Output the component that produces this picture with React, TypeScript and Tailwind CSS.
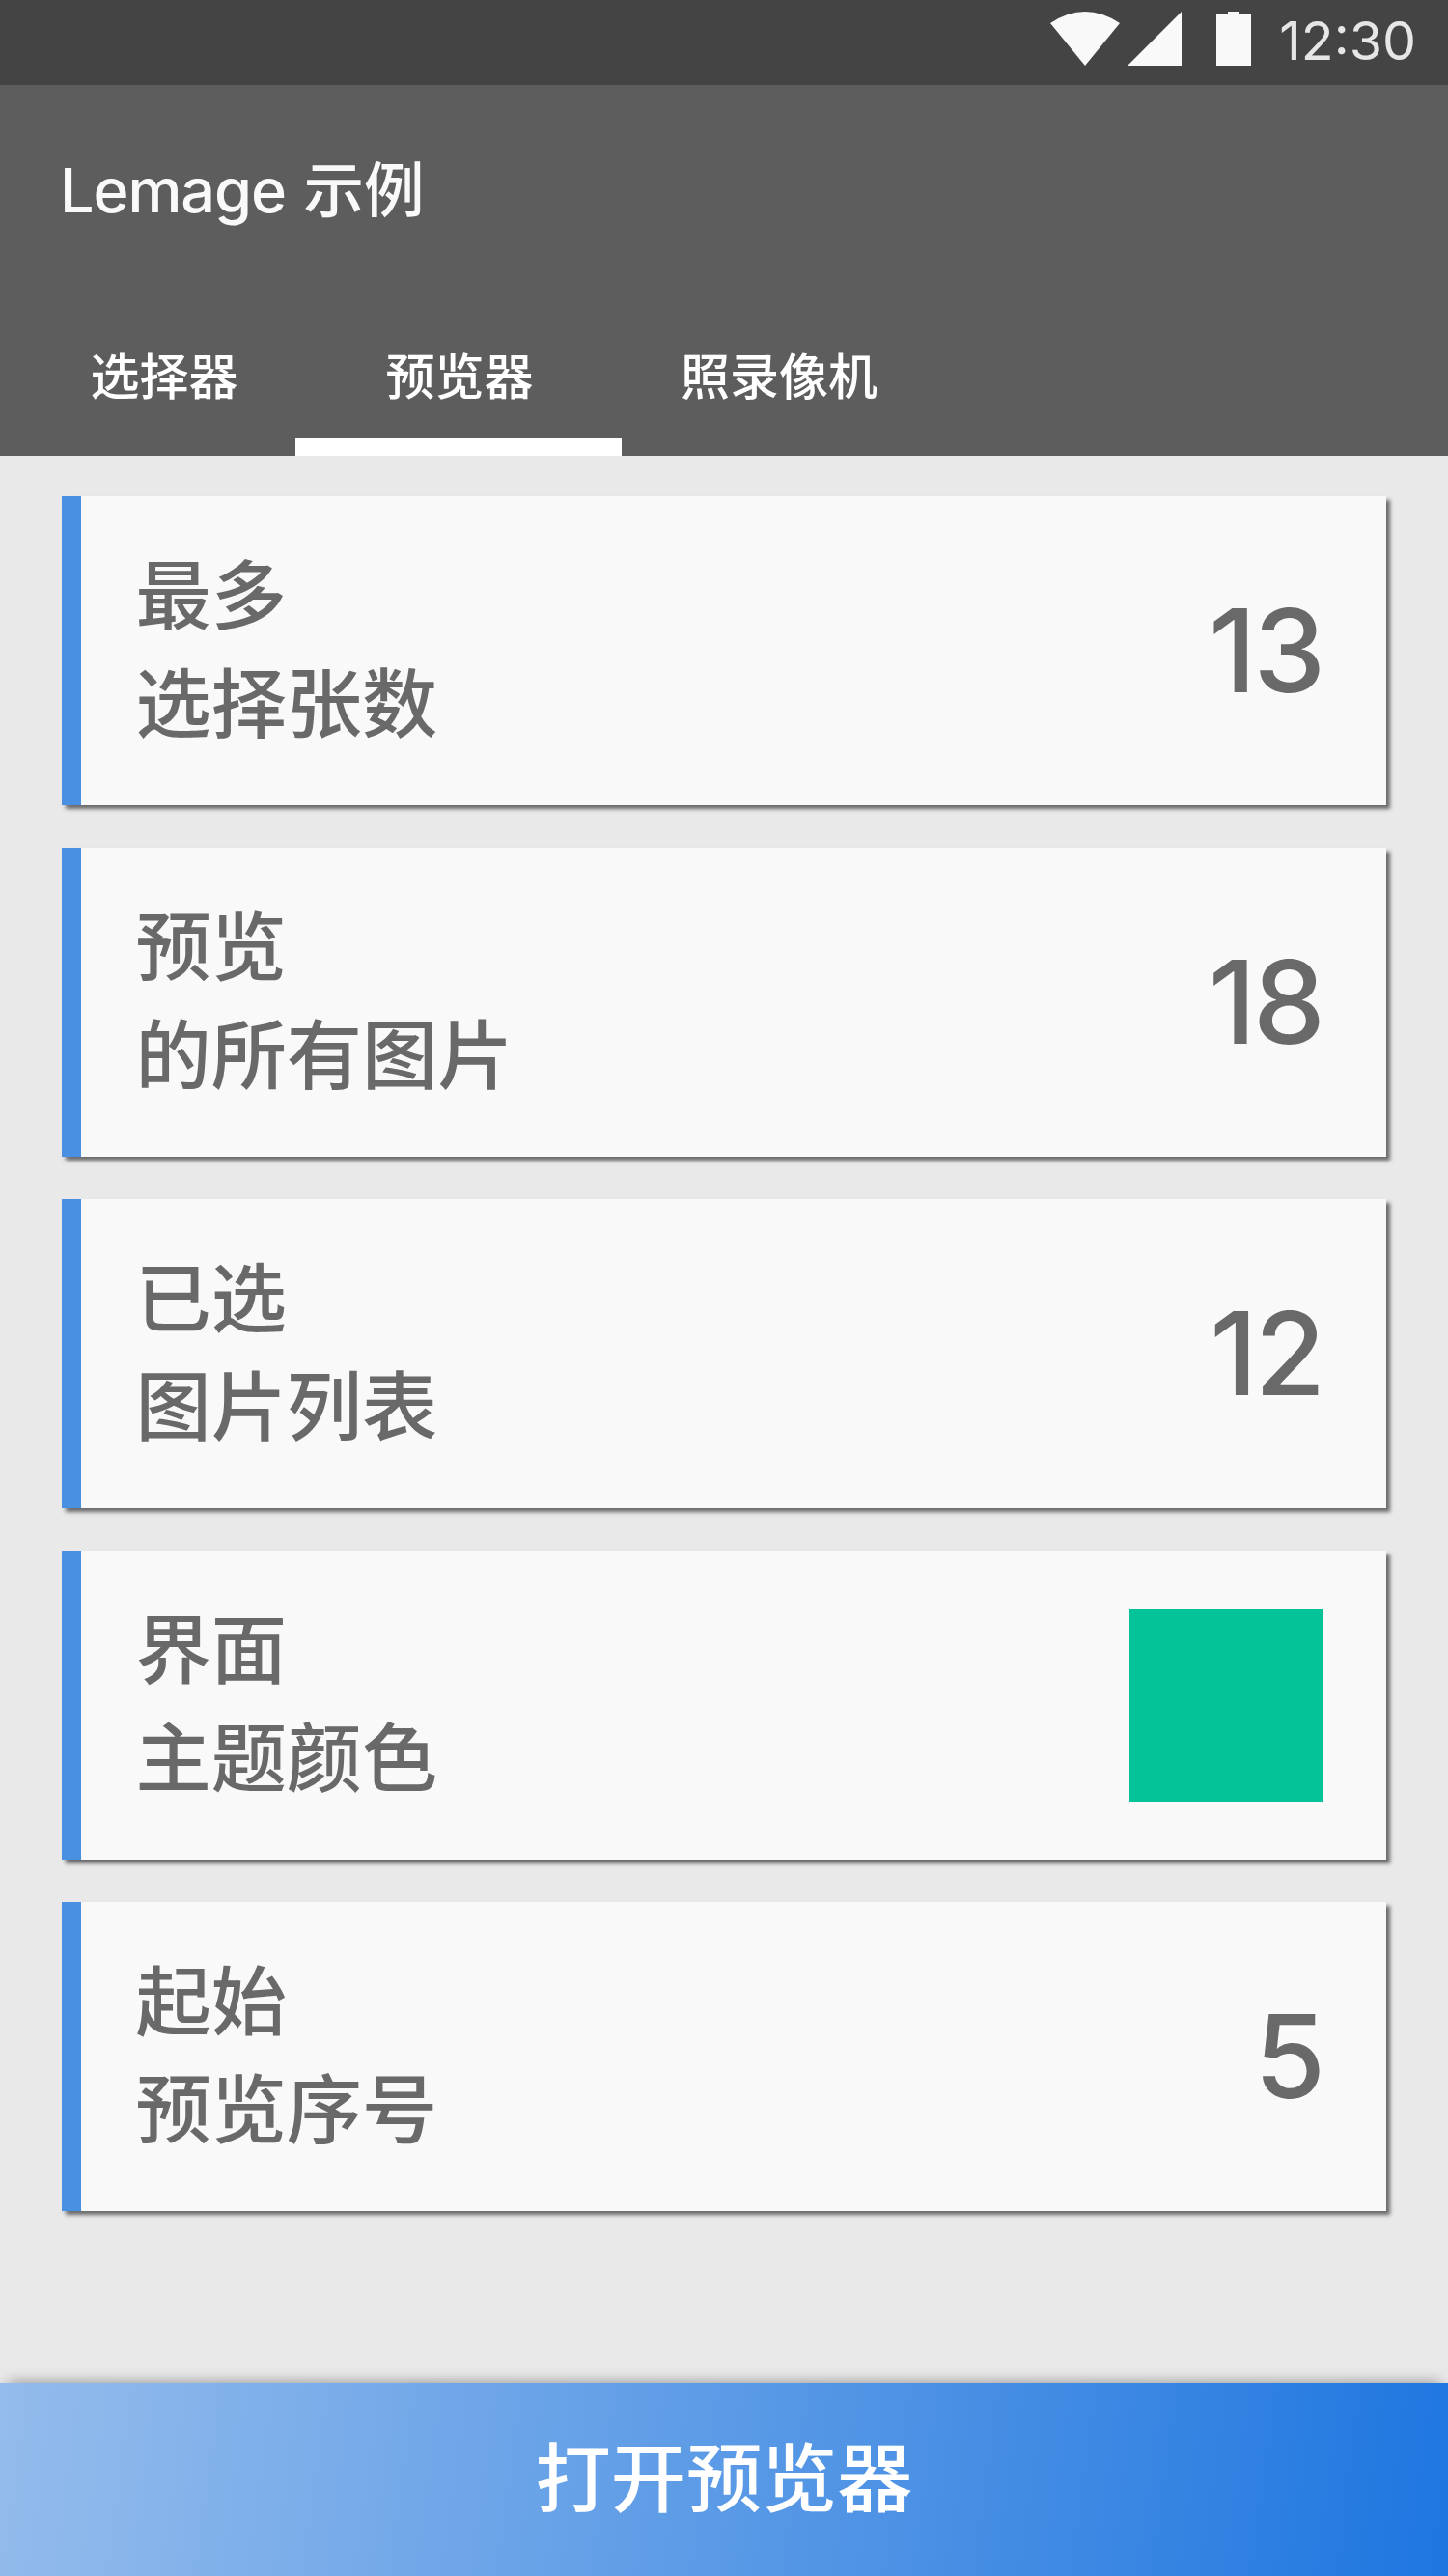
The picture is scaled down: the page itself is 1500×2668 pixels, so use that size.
const cards: { top: string; bottom: string; value?: string }[] = [
  { top: "最多", bottom: "选择张数", value: "13" },
  { top: "预览", bottom: "的所有图片", value: "18" },
  { top: "已选", bottom: "图片列表", value: "12" },
  { top: "界面", bottom: "主题颜色" },
  { top: "起始", bottom: "预览序号", value: "5" },
];

export default function App() {
  return (
    <div className="flex h-[2668px] w-[1500px] flex-col overflow-hidden bg-[#e9e9e9] font-['Inter','Noto_Sans_CJK_SC',sans-serif] font-medium text-white">
      <div className="flex h-[88px] shrink-0 justify-end bg-[#444444] pr-[33px]">
        <svg width="212" height="60" viewBox="1087 10 212 60" className="mt-[10px] mr-[26px]" fill="#f9f9f9">
          <path d="M1088 24Q1124 0 1160 24L1124 68Z" />
          <path d="M1224 12V68H1168Z" />
          <path d="M1260 15H1272V12H1284V15H1296V68H1260Z" />
        </svg>
        <span className="text-[55.5px] leading-[84px] font-normal text-[#e6e6e6]">12:30</span>
      </div>
      <header className="flex h-[384px] shrink-0 flex-col bg-[#5d5d5d]">
        <h1 className="mt-[64px] ml-[62px] h-[90px] text-[62.5px] leading-[90px] text-[#f9f9f9]">
          <span className="mr-[3px] text-[63px] tracking-[-1.1px]">Lemage </span>示例
        </h1>
        <nav className="mt-auto flex h-[162px] text-[51px] leading-[161px]">
          <div className="w-[306px] pl-[93.5px]">选择器</div>
          <div className="w-[338px] border-b-[18px] border-white pl-[93.5px]">预览器</div>
          <div className="pl-[61px]">照录像机</div>
        </nav>
      </header>
      <main className="flex flex-1 flex-col gap-[44px] px-[64px] pt-[42px] text-[#696969]">
        {cards.map((c) => (
          <section
            key={c.top}
            className="flex h-[320px] w-[1372px] items-center justify-between border-l-[20px] border-[#4990e2] bg-[#f9f9f9] pr-[66px] pl-[56.5px] shadow-[4px_4px_4px_rgba(0,0,0,0.55)]"
          >
            <div className="text-[78.2px] leading-[112px]">
              <div>{c.top}</div>
              <div>{c.bottom}</div>
            </div>
            {c.value ? (
              <div className="text-[119px] leading-none tracking-[-3px]">{c.value}</div>
            ) : (
              <div className="size-[200px] bg-[#05c399]" />
            )}
          </section>
        ))}
      </main>
      <button className="h-[200px] shrink-0 bg-[linear-gradient(98deg,#94bcec,#488fe4_66%,#1e76e0)] text-[78.2px] leading-[198px] shadow-[0_-8px_14px_-8px_rgba(0,0,0,0.4)]">
        打开预览器
      </button>
    </div>
  );
}
